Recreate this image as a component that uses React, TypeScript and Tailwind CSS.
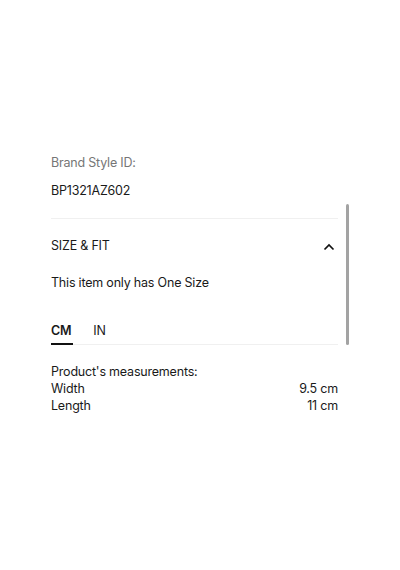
export default function App() {
  return (
    <div className="relative h-[570px] w-[400px] bg-white font-['Inter',sans-serif] text-[12.5px] tracking-[-0.2px] text-[#1a1a1a]">
      <div className="pl-[51px] pr-[62px] pt-[153px]">
        <p className="leading-[20px] text-[#767676]">Brand Style ID:</p>
        <p className="mt-[8px] leading-[20px]">BP1321AZ602</p>
        <div className="mt-[17px] h-px bg-[#f0f0f0]" />
        <div className="mt-[17px] flex items-center justify-between leading-[20px]">
          <span>SIZE &amp; FIT</span>
          <svg width="12" height="8" viewBox="0 0 12 8" className="mr-[3px] mt-[2px]">
            <path d="M1.5 6.5L6 2L10.5 6.5" fill="none" stroke="#111" strokeWidth="1.7" />
          </svg>
        </div>
        <p className="mt-[17px] leading-[20px]">This item only has One Size</p>
        <div className="mt-[28px] flex gap-[20px] border-b border-[#f0f0f0]">
          <span className="-mb-px border-b-2 border-[#111] pb-[2px] pr-[2px] font-semibold leading-[20px]">CM</span>
          <span className="pb-[2px] leading-[20px]">IN</span>
        </div>
        <div className="mt-[18px] leading-[17px]">
          <p>Product's measurements:</p>
          <div className="flex justify-between">
            <span>Width</span>
            <span>9.5 cm</span>
          </div>
          <div className="flex justify-between">
            <span>Length</span>
            <span>11 cm</span>
          </div>
        </div>
      </div>
      <div className="absolute left-[346px] top-[204px] h-[141px] w-[3px] rounded-full bg-[#a3a3a3]" />
    </div>
  );
}
